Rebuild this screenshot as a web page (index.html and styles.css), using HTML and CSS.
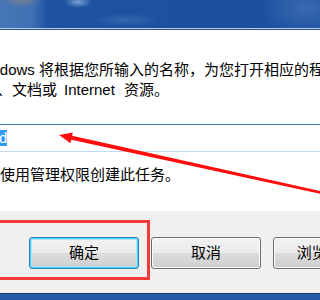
FILE: index.html
```html
<!DOCTYPE html>
<html>
<head>
<meta charset="utf-8">
<link rel="stylesheet" href="styles.css">
</head>
<body>
<div class="screen">
  <div class="titlebar"></div>
  <div class="dialog">
    <div class="content">
      <p class="desc">Windows 将根据您所输入的名称，为您打开相应的程序、<br>文件夹、文档或<span class="en">Internet</span>资源。</p>
      <div class="combo"><span class="sel">cmd</span></div>
      <p class="note">使用管理权限创建此任务。</p>
    </div>
    <div class="footer">
      <button class="btn default">确定</button>
      <button class="btn">取消</button>
      <button class="btn">浏览(B)...</button>
    </div>
  </div>
  <div class="taskbar"></div>
  <div class="mark-box"></div>
  <svg class="arrow" width="340" height="300" viewBox="0 0 340 300">
    <polygon points="59,135 72.9,132.4 72.1,135.8 340.3,195.4 339.7,198 71.3,139.8 70.5,143.2" fill="#ff0d0d"/>
  </svg>
</div>
</body>
</html>
```
FILE: styles.css
```css
* { box-sizing: border-box; }
html, body { margin: 0; padding: 0; }
html { background: #fff; }
body {
  overflow: hidden;
  background: #fff;
  font-family: "Liberation Sans", "Noto Sans CJK SC", sans-serif;
  font-size: 15px;
  color: #000;
}
.screen {
  position: relative;
  width: 100%;
  min-width: 300px;
  height: 300px;
  overflow: hidden;
  display: flex;
  flex-direction: column;
  background: #fff;
}
.titlebar {
  flex: none;
  height: 30px;
  background:
    linear-gradient(to bottom, transparent 28px, #b9cde6 28px, #b9cde6 29px, #2f5488 29px),
    radial-gradient(ellipse 14px 6px at 78px 2px, rgba(150,185,230,0.75), transparent),
    radial-gradient(ellipse 20px 8px at 22px 0px, rgba(170,140,110,0.5), transparent),
    radial-gradient(ellipse 34px 7px at 125px 20px, rgba(100,140,200,0.35), transparent),
    radial-gradient(ellipse 45px 30px at 305px 8px, rgba(90,130,200,0.5), transparent),
    linear-gradient(to right, #4676b6 0, #3e70b3 32px, #1d53a1 48px, #1a509d 100%);
}
.dialog {
  flex: none;
  width: 480px;
  margin-left: -70px;
}
.content {
  background: #fff;
  padding: 30px 0 26px 22px;
}
.desc {
  margin: 0;
  line-height: 20px;
  text-indent: 22px;
  white-space: nowrap;
}
.en { margin: 0 9px 0 7px; }
.combo {
  margin: 24px 0 0 24px;
  height: 28px;
  border: 1px solid;
  border-color: #3d7bad #b5cfe7 #c5d9ec #b5cfe7;
  background: #fff;
  padding: 5px 0 0 2px;
}
.sel {
  display: inline-block;
  height: 16px;
  line-height: 16px;
  vertical-align: top;
  background: #3399ff;
  color: #fff;
}
.note {
  margin: 13px 0 0 48px;
  line-height: 20px;
  white-space: nowrap;
}
.footer {
  background: #f0f0f0;
  height: 82px;
  padding: 26px 0 0 99px;
  display: flex;
  gap: 12px;
}
.btn {
  flex: none;
  width: 110px;
  height: 32px;
  padding: 0;
  font: inherit;
  line-height: 30px;
  color: #000;
  border: 1px solid #707070;
  border-radius: 3px;
  background: linear-gradient(#f2f2f2, #ebebeb 50%, #dddddd 50%, #cfcfcf);
  box-shadow: inset 0 0 0 1px #fbfbfb;
  white-space: nowrap;
}
.btn.default {
  border-color: #3c7fb1;
  box-shadow: inset 0 0 0 1px #48d0ff, inset 0 0 0 2px #a8e6fb;
}
.taskbar {
  flex: 1;
  background: linear-gradient(#1b3b6a 0, #1b3b6a 1px, #2c5fab 1px, #1f55a2 100%);
}
.mark-box {
  position: absolute;
  left: -10px;
  top: 220px;
  width: 160px;
  height: 60px;
  border: 3px solid #f23a3c;
}
.arrow {
  position: absolute;
  left: 0;
  top: 0;
  pointer-events: none;
}
```
